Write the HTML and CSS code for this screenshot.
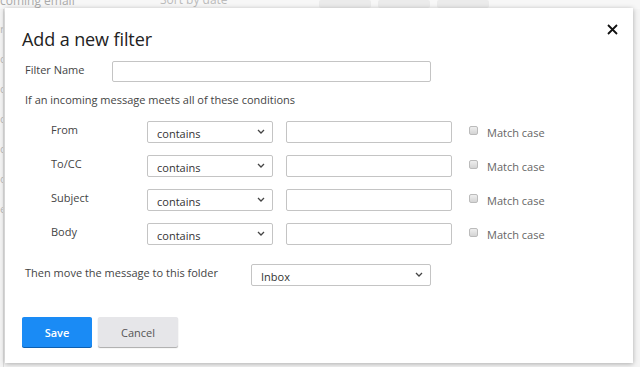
FILE: index.html
```html
<!DOCTYPE html>
<html>
<head>
<meta charset="utf-8">
<link rel="stylesheet" href="styles.css">
</head>
<body>
<div class="page">
  <div class="bg-top">
    <span class="bg-title">coming email</span>
    <span class="bg-sort">Sort by date</span>
    <span class="bg-btn b1"></span>
    <span class="bg-btn b2"></span>
    <span class="bg-btn b3"></span>
  </div>
  <div class="bg-side">
    <span>ri</span><span>c</span><span>c</span><span>c</span><span>c</span><span>o</span><span>e</span>
  </div>
</div>
<div class="dialog">
  <button class="close" aria-label="Close">
    <svg width="11" height="11" viewBox="0 0 11 11"><path d="M1 1L10 10M10 1L1 10" stroke="#111" stroke-width="1.8" fill="none"/></svg>
  </button>
  <h1 class="title">Add a new filter</h1>
  <div class="name-row">
    <label class="lbl">Filter Name</label>
    <input class="field name-field" type="text">
  </div>
  <p class="intro">If an incoming message meets all of these conditions</p>
  <div class="conds">
    <div class="cond">
      <span class="cond-lbl">From</span>
      <div class="sel"><span>contains</span><svg class="chev" width="8" height="5" viewBox="0 0 8 5"><path d="M1 1L4 4L7 1" stroke="#444" stroke-width="1.3" fill="none"/></svg></div>
      <input class="field txt" type="text">
      <span class="chk"></span><span class="mc">Match case</span>
    </div>
    <div class="cond">
      <span class="cond-lbl">To/CC</span>
      <div class="sel"><span>contains</span><svg class="chev" width="8" height="5" viewBox="0 0 8 5"><path d="M1 1L4 4L7 1" stroke="#444" stroke-width="1.3" fill="none"/></svg></div>
      <input class="field txt" type="text">
      <span class="chk"></span><span class="mc">Match case</span>
    </div>
    <div class="cond">
      <span class="cond-lbl">Subject</span>
      <div class="sel"><span>contains</span><svg class="chev" width="8" height="5" viewBox="0 0 8 5"><path d="M1 1L4 4L7 1" stroke="#444" stroke-width="1.3" fill="none"/></svg></div>
      <input class="field txt" type="text">
      <span class="chk"></span><span class="mc">Match case</span>
    </div>
    <div class="cond">
      <span class="cond-lbl">Body</span>
      <div class="sel"><span>contains</span><svg class="chev" width="8" height="5" viewBox="0 0 8 5"><path d="M1 1L4 4L7 1" stroke="#444" stroke-width="1.3" fill="none"/></svg></div>
      <input class="field txt" type="text">
      <span class="chk"></span><span class="mc">Match case</span>
    </div>
  </div>
  <div class="move-row">
    <span class="lbl move-lbl">Then move the message to this folder</span>
    <div class="sel folder"><span>Inbox</span><svg class="chev" width="8" height="5" viewBox="0 0 8 5"><path d="M1 1L4 4L7 1" stroke="#444" stroke-width="1.3" fill="none"/></svg></div>
  </div>
  <div class="actions">
    <button class="btn save">Save</button>
    <button class="btn cancel">Cancel</button>
  </div>
</div>
</body>
</html>
```
FILE: styles.css
```css
* { box-sizing: border-box; }
html, body { margin: 0; padding: 0; }
body {
  width: 640px;
  height: 367px;
  overflow: hidden;
  background: #f4f4f4;
  font-family: "Open Sans", "Noto Sans", sans-serif;
  color: #333;
  position: relative;
}
.page { color: #bbb; font-size: 11px; }
.bg-top {
  height: 9px;
  display: flex;
  align-items: flex-start;
  position: relative;
  background: #f7f7f7;
}
.bg-title { position: absolute; left: 0; top: -8px; color: #aaa; font-size: 12px; }
.bg-sort { position: absolute; left: 160px; top: -9px; color: #bbb; font-size: 12px; }
.bg-btn { position: absolute; top: 0; height: 8px; background: #ebebeb; border-radius: 2px; }
.b1 { left: 319px; width: 52px; }
.b2 { left: 378px; width: 52px; }
.b3 { left: 437px; width: 52px; }
.bg-side {
  width: 4px;
  height: 358px;
  border-right: 1px solid #ddd;
  display: flex;
  flex-direction: column;
  gap: 15px;
  padding-top: 12px;
  overflow: hidden;
  font-size: 11px;
  color: #bbb;
}
.dialog {
  position: absolute;
  left: 5px;
  top: 8px;
  width: 628px;
  height: 355px;
  background: #fff;
  box-shadow: 0 1px 5px rgba(0,0,0,0.3);
  padding: 0 0 0 17px;
}
.close {
  position: absolute;
  right: 15px;
  top: 16px;
  border: 0;
  background: none;
  padding: 0;
  width: 11px;
  height: 11px;
  display: flex;
}
.title {
  margin: 0;
  padding-top: 18px;
  font-weight: 400;
  font-size: 18px;
  line-height: 26px;
  color: #222;
  letter-spacing: -0.1px;
}
.lbl, .intro, .cond-lbl, .mc { font-size: 11px; color: #444; }
.name-row {
  display: flex;
  align-items: center;
  margin-top: 9px;
  padding-left: 3px;
}
.name-row .lbl { width: 87px; margin-top: -4px; }
.field {
  border: 1px solid #c4c4c4;
  border-radius: 2px;
  background: #fff;
  height: 22px;
  font: inherit;
  outline: none;
}
.name-field { width: 319px; height: 21px; }
.intro { margin: 11px 0 0 3px; line-height: 14px; }
.conds {
  margin-top: 14px;
  display: flex;
  flex-direction: column;
  gap: 12px;
}
.cond {
  display: flex;
  align-items: center;
  height: 22px;
}
.cond-lbl { width: 125px; padding-left: 29px; margin-top: -6px; }
.sel {
  border: 1px solid #c4c4c4;
  border-radius: 2px;
  height: 22px;
  width: 126px;
  display: flex;
  align-items: center;
  justify-content: space-between;
  padding: 0 7px 0 9px;
  font-size: 11px;
  color: #333;
  background: #fff;
}
.sel span { margin-top: 2px; }
.chev { margin-top: -2px; }
.txt { width: 166px; margin-left: 13px; }
.chk {
  width: 9px;
  height: 9px;
  border: 1px solid #bbb;
  border-radius: 2px;
  background: linear-gradient(#eee, #d4d4d4);
  margin-left: 17px;
  margin-top: -3px;
}
.mc { margin-left: 9px; color: #666; }
.move-row {
  display: flex;
  align-items: center;
  margin-top: 19px;
  padding-left: 3px;
}
.move-lbl { width: 226px; margin-top: -5px; }
.folder { width: 180px; height: 22px; }
.actions {
  display: flex;
  gap: 6px;
  margin-top: 31px;
}
.btn {
  height: 30px;
  border: 0;
  border-radius: 2px;
  font-family: "Open Sans", "Noto Sans", sans-serif;
  font-size: 11px;
  padding: 0;
}
.save {
  width: 70px;
  background: #1a8bf5;
  color: #fff;
  font-weight: 600;
  box-shadow: 0 1px 0 #0d5fb0;
}
.cancel {
  width: 80px;
  background: #e6e6e9;
  color: #555;
  box-shadow: 0 1px 1px #aaa;
}
```
